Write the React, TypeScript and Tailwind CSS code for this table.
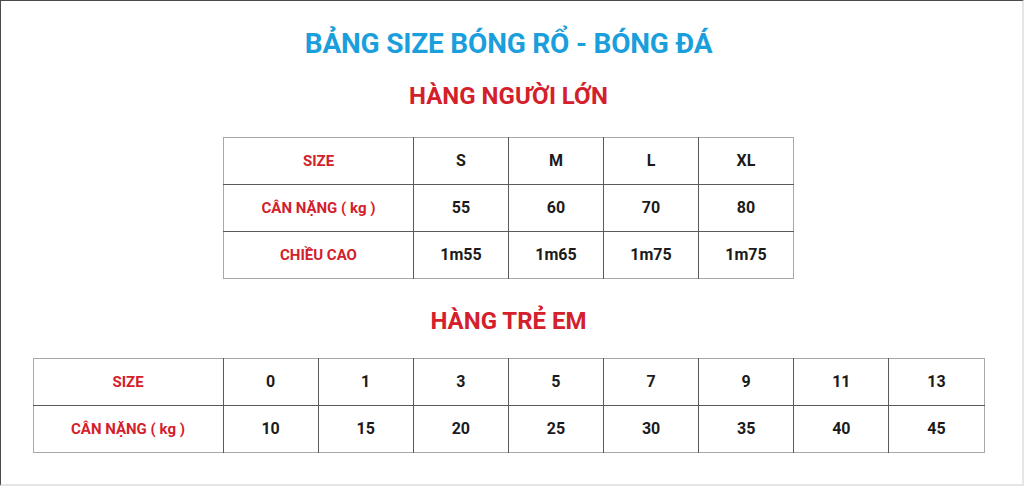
const adult = {
  sizes: ['S', 'M', 'L', 'XL'],
  weights: ['55', '60', '70', '80'],
  heights: ['1m55', '1m65', '1m75', '1m75'],
}

const kids = {
  sizes: ['0', '1', '3', '5', '7', '9', '11', '13'],
  weights: ['10', '15', '20', '25', '30', '35', '40', '45'],
}

function Row({ label, values, last }: { label: string; values: string[]; last?: boolean }) {
  return (
    <tr className="h-[47px]">
      <td
        className={`border-r border-[#5a5a5a] text-center text-[15px] font-bold text-[#d3202b] ${
          last ? '' : 'border-b'
        }`}
      >
        {label}
      </td>
      {values.map((v, i) => (
        <td
          key={i}
          className={`border-[#5a5a5a] text-center text-[16px] font-bold text-[#1b1b1b] ${
            i < values.length - 1 ? 'border-r' : ''
          } ${last ? '' : 'border-b'}`}
        >
          {v}
        </td>
      ))}
    </tr>
  )
}

function Cols({ n }: { n: number }) {
  return (
    <colgroup>
      <col className="w-[190px]" />
      {Array.from({ length: n }).map((_, i) => (
        <col key={i} />
      ))}
    </colgroup>
  )
}

export default function App() {
  return (
    <div
      className="w-[1024px] h-[486px] overflow-hidden bg-white border-t border-l border-t-[#4a4a4a] border-l-[#4a4a4a] border-r-2 border-b-2 border-r-[#e6e6e6] border-b-[#e6e6e6]"
      style={{ fontFamily: 'Roboto, "Liberation Sans", sans-serif' }}
    >
      <div className="flex flex-col items-center pr-[6px]">
        <h1 className="mt-[26px] text-[28px] leading-[34px] font-bold text-[#1a9fdc] tracking-[-0.2px]">
          BẢNG SIZE BÓNG RỔ - BÓNG ĐÁ
        </h1>
        <h2 className="mt-[20px] text-[24px] leading-[30px] font-bold text-[#d3202b]">HÀNG NGƯỜI LỚN</h2>

        <table className="mt-[26px] w-[571px] table-fixed border-collapse border border-[#a8a8a8]">
          <Cols n={4} />
          <tbody>
            <Row label="SIZE" values={adult.sizes} />
            <Row label="CÂN NẶNG ( kg )" values={adult.weights} />
            <Row label="CHIỀU CAO" values={adult.heights} last />
          </tbody>
        </table>

        <h2 className="mt-[27px] text-[24px] leading-[30px] font-bold text-[#d3202b]">HÀNG TRẺ EM</h2>

        <table className="mt-[22px] w-[952px] table-fixed border-collapse border border-[#a8a8a8]">
          <Cols n={8} />
          <tbody>
            <Row label="SIZE" values={kids.sizes} />
            <Row label="CÂN NẶNG ( kg )" values={kids.weights} last />
          </tbody>
        </table>
      </div>
    </div>
  )
}
